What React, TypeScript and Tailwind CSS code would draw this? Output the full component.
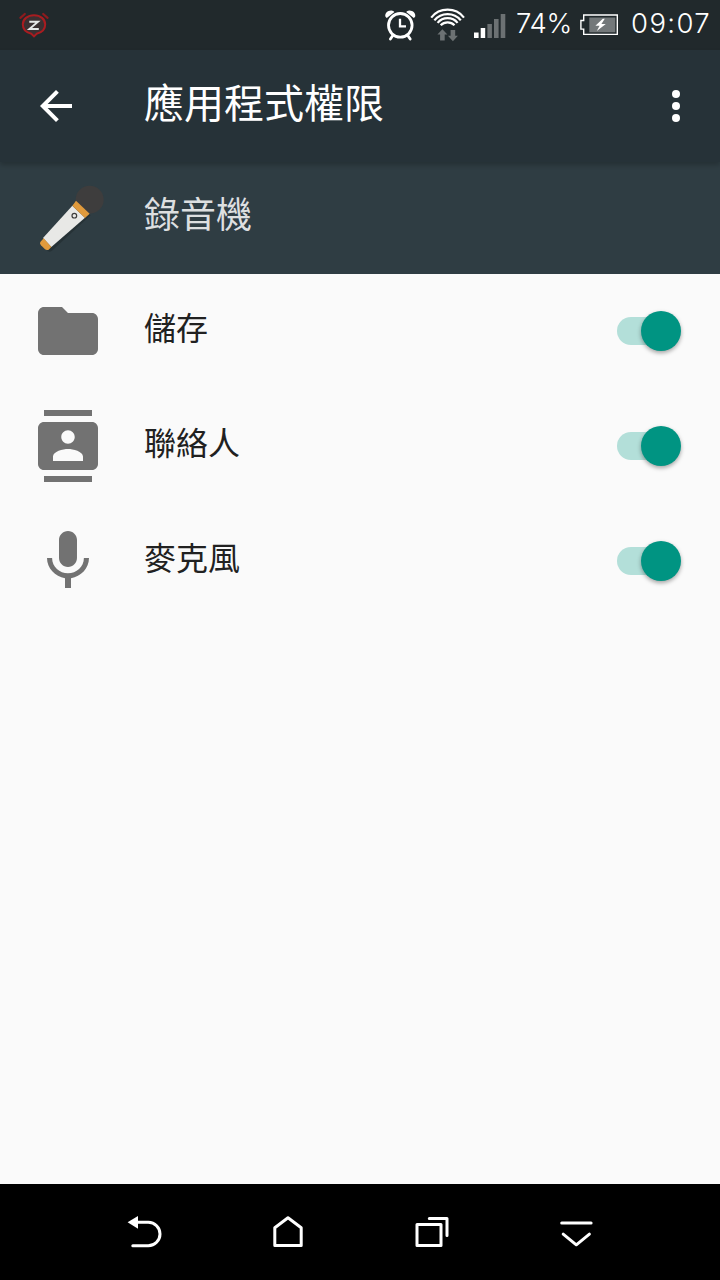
import type { ReactNode } from 'react'

const permissions = [
  { id: 'storage', label: '儲存', icon: <FolderIcon /> },
  { id: 'contacts', label: '聯絡人', icon: <ContactsIcon /> },
  { id: 'microphone', label: '麥克風', icon: <MicIcon /> },
]

function FolderIcon() {
  return (
    <svg className="h-[72px] w-[72px] fill-[#727272]" viewBox="0 0 24 24">
      <path d="M10 4H4c-1.1 0-1.99.9-1.99 2L2 18c0 1.1.9 2 2 2h16c1.1 0 2-.9 2-2V8c0-1.1-.9-2-2-2h-8l-2-2z" />
    </svg>
  )
}

function ContactsIcon() {
  return (
    <svg className="h-[72px] w-[72px] fill-[#727272]" viewBox="0 0 24 24">
      <path d="M20 0H4v2h16V0zM4 24h16v-2H4v2zM20 4H4c-1.1 0-2 .9-2 2v12c0 1.1.9 2 2 2h16c1.1 0 2-.9 2-2V6c0-1.1-.9-2-2-2zm-8 2.75c1.24 0 2.25 1.01 2.25 2.25s-1.01 2.25-2.25 2.25S9.75 10.24 9.75 9 10.76 6.75 12 6.75zM17 17H7v-1.5c0-1.67 3.33-2.5 5-2.5s5 .83 5 2.5V17z" />
    </svg>
  )
}

function MicIcon() {
  return (
    <svg className="h-[72px] w-[72px] fill-[#727272]" viewBox="0 0 24 24">
      <path d="M12 14c1.66 0 2.99-1.34 2.99-3L15 5c0-1.66-1.34-3-3-3S9 3.34 9 5v6c0 1.66 1.34 3 3 3zm5.3-3c0 3-2.54 5.1-5.3 5.1S6.7 14 6.7 11H5c0 3.41 2.72 6.23 6 6.72V21h2v-3.28c3.28-.48 6-3.3 6-6.72h-1.7z" />
    </svg>
  )
}

function SleepAlarmIcon() {
  return (
    <svg className="h-[28px] w-[32px]" viewBox="18 11 32 28" fill="none">
      <path d="M20.4 17.8l4.4-3.8M47.6 17.8l-4.4-3.8" stroke="#8d1b1e" strokeWidth="2.2" strokeLinecap="round" />
      <path d="M34 15.2c6.6 0 11.2 4 11.2 9.4 0 4.6-3.4 8-8.6 9.2L34 36.4l-2.6-2.6c-5.2-1.2-8.6-4.6-8.6-9.2 0-5.4 4.6-9.4 11.2-9.4z" fill="#3a3032" stroke="#a81c20" strokeWidth="2" />
      <path d="M29.3 21.8h8.7l-8.6 7.2h9.4" stroke="#e6e8e8" strokeWidth="1.9" />
    </svg>
  )
}

function AlarmIcon() {
  return (
    <svg className="h-[34px] w-[33px]" viewBox="384 8 33 34" fill="none">
      <path d="M385.4 16.6c-.8-3.4 2.4-6.4 6-6.2 1.4.1 2.4.7 3 1.5l-7.6 6.1c-.7-.2-1.2-.8-1.4-1.4zM415.2 16.6c.8-3.4-2.4-6.4-6-6.2-1.4.1-2.4.7-3 1.5l7.6 6.1c.7-.2 1.2-.8 1.4-1.4z" fill="#fff" />
      <circle cx="400.3" cy="25.3" r="11.8" stroke="#fff" strokeWidth="2.8" />
      <path d="M400 18.8v7.6h6" stroke="#fff" strokeWidth="2.3" />
      <path d="M393 35.2l-2.6 3.8M407.6 35.2l2.6 3.8" stroke="#fff" strokeWidth="2.8" strokeLinecap="round" />
    </svg>
  )
}

function WifiIcon() {
  return (
    <svg className="h-[34px] w-[35px]" viewBox="430 8 35 34" fill="none">
      <g stroke="#fff" strokeWidth="2.2">
        <path d="M431.2 17.6a21 21 0 0 1 32.8 0" />
        <path d="M434.4 20.4a17 17 0 0 1 26.4 0" />
        <path d="M437.6 22.9a13 13 0 0 1 20 0" />
        <path d="M440.7 25.3a9.6 9.6 0 0 1 13.8 0" />
      </g>
      <path d="M442.4 29.2l5 5.4h-2.7v5.8h-4.6v-5.8h-2.7zM452.9 41.2l5-5.4h-2.7V30h-4.6v5.8h-2.7z" fill="#6c7173" />
    </svg>
  )
}

function SignalIcon() {
  return (
    <svg className="h-[34px] w-[32px]" viewBox="474 8 32 34">
      <path d="M474 32.5h4.6V38H474zM480.7 28h4.5v10h-4.5z" fill="#fff" />
      <path d="M487.4 24h4.5v14h-4.5zM494 19h4.6v19H494zM500.7 14h4.6v24h-4.6z" fill="#6c7173" />
    </svg>
  )
}

function BatteryIcon() {
  return (
    <svg className="h-[34px] w-[39px]" viewBox="580 8 39 34" fill="none">
      <path d="M583.7 15h33.6v19.4h-33.6v-5.3h-2.8v-8.6h2.8z" stroke="#fff" strokeWidth="1.4" />
      <path d="M589.3 17.5h26v14.8h-26z" fill="#73787a" />
      <path d="M602.8 18.8l-7.4 7h4.2l-2.8 5.2 9-7h-4.4l3.4-5.2z" fill="#fff" />
    </svg>
  )
}

function RecorderIcon() {
  return (
    <svg className="h-[72px] w-[72px]" viewBox="36 66 216 216">
      <path d="M64 250l20 24q6 3 12-2l116-106-42-40z" fill="#000" opacity="0.18" />
      <circle cx="209" cy="119" r="42" fill="#3e3d3d" />
      <path d="M157 137l38 36-101 88-25-27z" fill="#e8e8e6" />
      <path d="M168 122l41 39-14 13-38-37z" fill="#e09a3c" />
      <path d="M71 235l23 26-8 8q-6 3-11-1l-12-12q-5-5-2-10z" fill="#e09a3c" />
      <circle cx="163" cy="167" r="7" fill="none" stroke="#3e3d3d" strokeWidth="3.6" />
    </svg>
  )
}

function Toggle() {
  return (
    <div role="switch" aria-checked="true" className="flex h-7 w-[58px] items-center justify-end rounded-full bg-[#b3dfd9]">
      <div className="-mr-1.5 h-10 w-10 shrink-0 rounded-full bg-[#009482] shadow-[0_2px_4px_rgba(0,0,0,0.35)]" />
    </div>
  )
}

function NavButton({ label, children }: { label: string; children: ReactNode }) {
  return (
    <button aria-label={label} className="flex w-36 items-center justify-center">
      <svg className="h-12 w-12" viewBox="0 0 48 48" fill="none" stroke="#fff" strokeWidth="3" strokeLinecap="round" strokeLinejoin="round">
        {children}
      </svg>
    </button>
  )
}

export default function App() {
  return (
    <div className="flex h-[1280px] w-[720px] flex-col bg-[#fafafa] font-['Noto_Sans_CJK_TC',sans-serif]">
      {/* Status bar */}
      <div className="flex h-[50px] items-center bg-[#21292c] pr-[10px] pl-[18px] font-['Inter',sans-serif] text-white">
        <SleepAlarmIcon />
        <div className="flex flex-1 items-center justify-end">
          <AlarmIcon />
          <span className="w-[13px]" />
          <WifiIcon />
          <span className="w-[9px]" />
          <SignalIcon />
          <span className="w-[74px] pb-[3px] pl-[10px] text-[27.5px] leading-none font-light tracking-[-0.3px] whitespace-nowrap">74%</span>
          <BatteryIcon />
          <span className="w-[91px] pb-[3px] pl-[12px] text-[27.5px] leading-none font-light tracking-[1.4px] whitespace-nowrap">09:07</span>
        </div>
      </div>

      {/* Toolbar */}
      <header className="relative flex h-28 items-center bg-[#263238] px-5 shadow-[0_3px_5px_rgba(0,0,0,0.22)]">
        <button aria-label="返回" className="ml-3">
          <svg className="h-12 w-12 fill-white" viewBox="0 0 24 24">
            <path d="M20 11H7.83l5.59-5.59L12 4l-8 8 8 8 1.41-1.41L7.83 13H20v-2z" />
          </svg>
        </button>
        <h1 className="ml-16 flex-1 pb-2.5 text-[40px] leading-none text-white">應用程式權限</h1>
        <button aria-label="更多選項">
          <svg className="h-12 w-12 fill-white" viewBox="0 0 24 24">
            <circle cx="12" cy="6" r="2" />
            <circle cx="12" cy="12" r="2" />
            <circle cx="12" cy="18" r="2" />
          </svg>
        </button>
      </header>

      {/* App the permissions belong to */}
      <div className="flex h-28 items-center gap-10 bg-[#2f3d43] pl-8">
        <RecorderIcon />
        <span className="pb-3 text-[36px] leading-none text-[#dddfe0]">錄音機</span>
      </div>

      <main className="flex-1">
        {permissions.map(({ id, label, icon }) => (
          <div key={id} className="flex h-[114.67px] items-center gap-10 pr-[45px] pl-8">
            {icon}
            <span className="flex-1 pb-2.5 text-[32px] leading-none text-[#212121]">{label}</span>
            <Toggle />
          </div>
        ))}
      </main>

      {/* Navigation bar */}
      <nav className="flex h-24 justify-center bg-black">
        <NavButton label="返回">
          <path d="M16 14.3h12.3a11.7 11.7 0 0 1 0 23.4H12.8" />
          <path d="M7.6 14.3L18 8v12.7z" fill="#fff" stroke="none" />
        </NavButton>
        <NavButton label="首頁">
          <path d="M10.8 19.8L24 9.8l13.2 10v17.8H10.8z" />
        </NavButton>
        <NavButton label="最近">
          <path d="M9 16.4h24v21.2H9z" />
          <path d="M21.3 10.4H39v17" />
        </NavButton>
        <NavButton label="隱藏">
          <path d="M9.7 15h29.4M11.2 26.2l13.1 10.6 13.1-10.6" />
        </NavButton>
      </nav>
    </div>
  )
}
